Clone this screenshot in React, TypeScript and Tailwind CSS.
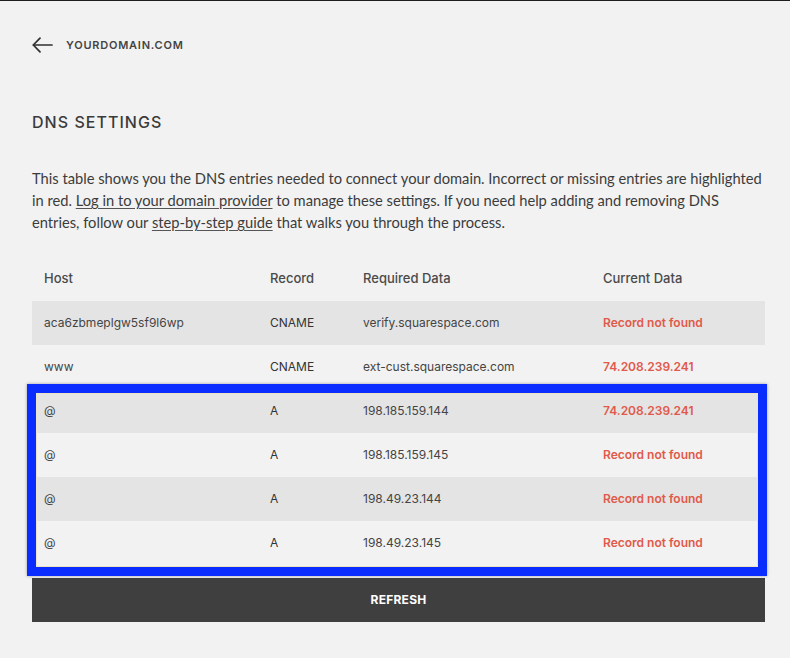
import React from "react";

const rows = [
  { host: "aca6zbmeplgw5sf9l6wp", record: "CNAME", req: "verify.squarespace.com", cur: "Record not found" },
  { host: "www", record: "CNAME", req: "ext-cust.squarespace.com", cur: "74.208.239.241" },
  { host: "@", record: "A", req: "198.185.159.144", cur: "74.208.239.241" },
  { host: "@", record: "A", req: "198.185.159.145", cur: "Record not found" },
  { host: "@", record: "A", req: "198.49.23.144", cur: "Record not found" },
  { host: "@", record: "A", req: "198.49.23.145", cur: "Record not found" },
];

export default function App() {
  return (
    <div className="w-[790px] h-[658px] bg-[#f2f2f2] border-t border-[#1e1e1e] overflow-hidden text-[#3c3c3c]" style={{ fontFamily: "Inter, 'Noto Sans', sans-serif" }}>
      <div className="px-[32px] pt-[34px]">
        <div className="flex items-center h-5 gap-[13px]">
          <svg width="21" height="16" viewBox="0 0 21 16" fill="none" stroke="#2f2f2f" strokeWidth="1.7" strokeLinecap="round" strokeLinejoin="round">
            <path d="M20 8H1.5" />
            <path d="M8 1.2L1.3 8l6.7 6.8" />
          </svg>
          <span className="text-[11px] font-semibold tracking-[0.07em] text-[#444]">YOURDOMAIN.COM</span>
        </div>

        <h1 className="mt-[55px] h-6 leading-6 text-[16px] font-medium tracking-[0.065em] text-[#3a3a3a]">DNS SETTINGS</h1>

        <p className="mt-[33px] text-[14.7px] leading-[22px] text-[#3c3c3c] w-[745px] whitespace-nowrap" style={{ fontFamily: "Lato, 'Noto Sans', sans-serif" }}>
          This table shows you the DNS entries needed to connect your domain. Incorrect or missing entries are highlighted
          <br />
          in red. <span className="underline underline-offset-[2px] decoration-[#555]">Log in to your domain provider</span> to manage these settings. If you need help adding and removing DNS
          <br />
          entries, follow our <span className="underline underline-offset-[2px] decoration-[#555]">step-by-step guide</span> that walks you through the process.
        </p>

        <div className="mt-[23px] w-[733px]">
          <div className="grid grid-cols-[226px_93px_240px_1fr] h-[45px] items-center text-[13px] font-medium text-[#4a4a4a]">
            <div className="pl-3">Host</div>
            <div className="pl-3">Record</div>
            <div className="pl-3">Required Data</div>
            <div className="pl-3">Current Data</div>
          </div>
          <div className="relative">
            {rows.map((r, i) => (
              <div
                key={i}
                className={`grid grid-cols-[226px_93px_240px_1fr] h-[44px] items-center text-[12px] ${i % 2 === 0 ? "bg-[#e4e4e4]" : "bg-[#f2f2f2]"}`}
              >
                <div className="pl-3 text-[#444]">{r.host}</div>
                <div className="pl-3 text-[#333]">{r.record}</div>
                <div className="pl-3 text-[#444]">{r.req}</div>
                <div className="pl-3 font-semibold text-[#e0594a]">{r.cur}</div>
              </div>
            ))}
            <div className="absolute left-[-5px] top-[83px] w-[740px] h-[192px] border-[9px] border-[#0a2cff] shadow-[0_0_3px_rgba(0,0,40,0.35)] pointer-events-none">
              <div className="w-full h-full border border-[#ece3c6]" />
            </div>
          </div>
          <button className="mt-[13px] w-full h-[44px] bg-[#3f3f3f] text-white text-[12px] font-bold tracking-[0.02em]">
            REFRESH
          </button>
        </div>
      </div>
    </div>
  );
}
